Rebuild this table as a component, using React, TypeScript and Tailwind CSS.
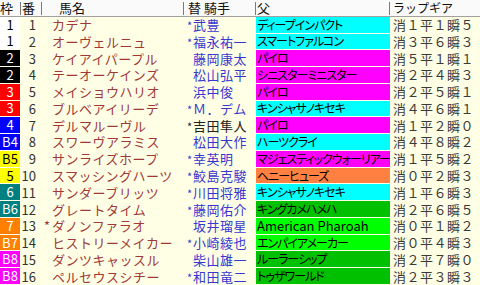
import React from "react";

type Row = {
  waku: string;
  wakuBg: string;
  wakuText: string;
  num: number;
  name: string;
  mark?: boolean;
  jockey: string;
  jMark?: boolean;
  jBlack?: boolean;
  sire: string;
  sireBg: string;
  lap: string;
};

const W1 = "bg-white";
const W2 = "bg-black";
const W3 = "bg-[#ff0000]";
const W4 = "bg-[#0000ff]";
const W5 = "bg-[#ffff00]";
const W6 = "bg-[#008080]";
const W7 = "bg-[#ff8000]";
const W8 = "bg-[#ff00ff]";

const CY = "bg-[#00ffff]";
const MG = "bg-[#ff00ff]";
const OR = "bg-[#ff8040]";
const DG = "bg-[#00c000]";
const LG = "bg-[#00ff00]";

const rows: Row[] = [
  { waku: "1", wakuBg: W1, wakuText: "text-black", num: 1, name: "カデナ", jockey: "武豊", jMark: true, sire: "ディープインパクト", sireBg: CY, lap: "消１平１瞬５" },
  { waku: "1", wakuBg: W1, wakuText: "text-black", num: 2, name: "オーヴェルニュ", jockey: "福永祐一", jMark: true, sire: "スマートファルコン", sireBg: CY, lap: "消３平６瞬３" },
  { waku: "2", wakuBg: W2, wakuText: "text-white", num: 3, name: "ケイアイパープル", jockey: "藤岡康太", sire: "パイロ", sireBg: MG, lap: "消５平１瞬１" },
  { waku: "2", wakuBg: W2, wakuText: "text-white", num: 4, name: "テーオーケインズ", jockey: "松山弘平", sire: "シニスターミニスター", sireBg: MG, lap: "消２平４瞬３" },
  { waku: "3", wakuBg: W3, wakuText: "text-white", num: 5, name: "メイショウハリオ", jockey: "浜中俊", sire: "パイロ", sireBg: MG, lap: "消２平５瞬１" },
  { waku: "3", wakuBg: W3, wakuText: "text-white", num: 6, name: "ブルベアイリーデ", jockey: "Ｍ．デム", jMark: true, sire: "キンシャサノキセキ", sireBg: CY, lap: "消４平６瞬１" },
  { waku: "4", wakuBg: W4, wakuText: "text-white", num: 7, name: "デルマルーヴル", jockey: "吉田隼人", jMark: true, jBlack: true, sire: "パイロ", sireBg: MG, lap: "消１平２瞬０" },
  { waku: "B4", wakuBg: W4, wakuText: "text-white", num: 8, name: "スワーヴアラミス", jockey: "松田大作", sire: "ハーツクライ", sireBg: CY, lap: "消４平８瞬２" },
  { waku: "B5", wakuBg: W5, wakuText: "text-black", num: 9, name: "サンライズホープ", jockey: "幸英明", jMark: true, sire: "マジェスティックウォーリアー", sireBg: MG, lap: "消１平５瞬２" },
  { waku: "5", wakuBg: W5, wakuText: "text-black", num: 10, name: "スマッシングハーツ", jockey: "鮫島克駿", jMark: true, sire: "ヘニーヒューズ", sireBg: OR, lap: "消０平２瞬３" },
  { waku: "6", wakuBg: W6, wakuText: "text-white", num: 11, name: "サンダーブリッツ", jockey: "川田将雅", jMark: true, sire: "キンシャサノキセキ", sireBg: CY, lap: "消１平６瞬３" },
  { waku: "B6", wakuBg: W6, wakuText: "text-white", num: 12, name: "グレートタイム", jockey: "藤岡佑介", jMark: true, sire: "キングカメハメハ", sireBg: DG, lap: "消２平６瞬５" },
  { waku: "7", wakuBg: W7, wakuText: "text-white", num: 13, name: "ダノンファラオ", mark: true, jockey: "坂井瑠星", sire: "American Pharoah", sireBg: LG, lap: "消０平１瞬２" },
  { waku: "B7", wakuBg: W7, wakuText: "text-white", num: 14, name: "ヒストリーメイカー", jockey: "小崎綾也", jMark: true, sire: "エンパイアメーカー", sireBg: LG, lap: "消０平４瞬３" },
  { waku: "B8", wakuBg: W8, wakuText: "text-white", num: 15, name: "ダンツキャッスル", jockey: "柴山雄一", sire: "ルーラーシップ", sireBg: DG, lap: "消２平７瞬０" },
  { waku: "B8", wakuBg: W8, wakuText: "text-white", num: 16, name: "ペルセウスシチー", jockey: "和田竜二", jMark: true, sire: "トゥザワールド", sireBg: DG, lap: "消２平３瞬３" },
];

function Head({ label, pad, sep = true }: { label: string; pad: string; sep?: boolean }) {
  return (
    <div className={`relative flex items-center whitespace-nowrap border-b border-[#a0a0a0] bg-[#fafafa] text-[#111] ${pad}`}>
      {label}
      {sep && <span className="absolute right-0 top-[2px] bottom-[1px] w-px bg-[#7a7a7a]" />}
    </div>
  );
}

export default function App() {
  return (
    <div className="w-[480px] h-[285px] overflow-hidden bg-[#ffffe6] font-['Noto_Sans_CJK_JP',sans-serif] text-[13px] leading-[14px] grid grid-cols-[21px_21px_142px_72px_134px_90px] grid-rows-[repeat(17,minmax(0,1fr))]">
      {/* header */}
      <Head label="枠" pad="" />
      <Head label="番" pad="pl-[1px]" />
      <Head label="馬名" pad="pl-[17px]" />
      <Head label="替 騎手" pad="pl-[4px]" />
      <Head label="父" pad="pl-[1px]" />
      <Head label="ラップギア" pad="pl-[3px] text-[12px]" sep={false} />

      {rows.map((r) => {
        const latin = /^[A-Za-z ]+$/.test(r.sire);
        return (
          <React.Fragment key={r.num}>
            <div className="pb-px pr-px">
              <div className={`h-full flex items-center justify-center ${r.wakuBg} ${r.wakuText}`}>{r.waku}</div>
            </div>
            <div className="flex items-center justify-end pr-[6px] text-[#333]">{r.num}</div>
            <div className="flex items-center pl-[2px] whitespace-nowrap text-[#a03838] tracking-[0.5px]">
              <span className="w-[8px] shrink-0">{r.mark ? "*" : ""}</span>
              {r.name}
            </div>
            <div
              className={`flex items-center pl-[3px] whitespace-nowrap tracking-[0.5px] ${
                r.jBlack ? "text-[#222]" : "text-[#3838d0]"
              }`}
            >
              <span className="w-[6px] shrink-0 text-[11px]">{r.jMark ? "*" : ""}</span>
              {r.jockey}
            </div>
            <div className="pb-px">
              <div
                className={`h-full flex items-center pl-[1px] whitespace-nowrap text-black ${r.sireBg} ${
                  latin ? "text-[13px]" : "text-[12px] tracking-[-1px] [font-feature-settings:'palt']"
                }`}
              >
                {r.sire}
              </div>
            </div>
            <div className="flex items-center pl-[3px] whitespace-nowrap text-[#3a3a3a] tracking-[0.5px]">{r.lap}</div>
          </React.Fragment>
        );
      })}
    </div>
  );
}
